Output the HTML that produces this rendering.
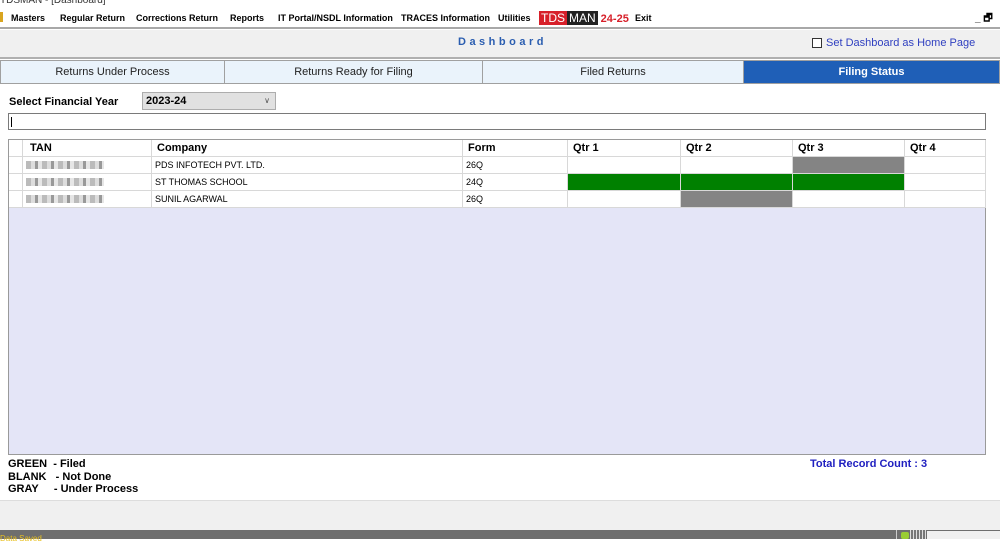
<!DOCTYPE html>
<html><head><style>
*{margin:0;padding:0;box-sizing:border-box}
body{width:1000px;height:539px;position:relative;overflow:hidden;background:#fff;font-family:"Liberation Sans",Arial,sans-serif;font-size:11px;color:#000}
.a{position:absolute}
.m{position:absolute;top:13px;font-weight:bold;font-size:9px;white-space:nowrap}
.tab{position:absolute;top:60px;height:24px;background:#eaf3fb;border:1px solid #a0a0a0;text-align:center;line-height:22px;font-size:11px;color:#222}
.cell{position:absolute;border-right:1px solid #d8d8d8;border-bottom:1px solid #d8d8d8;background:#fff;font-size:9px;line-height:16px;padding-left:3px}
.blur{width:78px;height:8px;margin-top:4px;background:repeating-linear-gradient(90deg,#bbb 0 5px,#ddd 5px 9px,#999 9px 12px,#e6e6e6 12px 16px)}
</style></head><body>
<div class="a" style="top:-5px;left:0;font-size:10px;color:#333">TDSMAN - [Dashboard]</div>
<div class="a" style="top:8px;left:0;width:1000px;height:21px;background:#fff;border-bottom:2px solid #a8a8a8"></div>
<div class="a" style="top:12px;left:0;width:3px;height:10px;background:#d9a520"></div>
<div class="m" style="left:11px">Masters</div>
<div class="m" style="left:60px">Regular Return</div>
<div class="m" style="left:136px">Corrections Return</div>
<div class="m" style="left:230px">Reports</div>
<div class="m" style="left:278px">IT Portal/NSDL Information</div>
<div class="m" style="left:401px">TRACES Information</div>
<div class="m" style="left:498px">Utilities</div>
<div class="a" style="top:11px;left:539px;height:15px;font-size:12px;line-height:15px;white-space:nowrap"><span style="background:#d7202a;color:#fff;padding:0 2px">TDS</span><span style="background:#222;color:#fff;padding:0 2px">MAN</span><span style="color:#d7202a;font-weight:bold;padding:0 3px;font-size:11px">24-25</span></div>
<div class="m" style="left:635px">Exit</div>
<div class="a" style="top:11px;left:975px;font-size:10px;font-weight:bold">_ &#x1F5D7;</div>
<div class="a" style="top:30px;left:0;width:1000px;height:29px;background:#f0f0f0;border-bottom:2px solid #b0b0b0"></div>
<div class="a" style="top:36px;left:458px;color:#2a5db0;font-weight:bold;font-size:11px;letter-spacing:3.5px">Dashboard</div>
<div class="a" style="top:38px;left:812px;width:10px;height:10px;border:1px solid #333;background:#fff"></div>
<div class="a" style="top:37px;left:826px;color:#3040c0;font-size:11px">Set Dashboard as Home Page</div>
<div class="tab" style="left:0;width:225px">Returns Under Process</div>
<div class="tab" style="left:224px;width:259px">Returns Ready for Filing</div>
<div class="tab" style="left:482px;width:262px">Filed Returns</div>
<div class="tab" style="left:743px;width:257px;background:#1f5fb7;color:#fff;font-weight:bold">Filing Status</div>
<div class="a" style="top:96px;left:9px;font-weight:bold;font-size:11px">Select Financial Year</div>
<div class="a" style="top:92px;left:142px;width:134px;height:18px;background:#e1e1e1;border:1px solid #adadad;font-weight:bold;font-size:11px;line-height:16px;padding-left:3px">2023-24<span style="position:absolute;right:5px;font-weight:normal;font-size:8px;color:#555">&#8744;</span></div>
<div class="a" style="top:113px;left:8px;width:978px;height:17px;border:1px solid #7a7a7a;background:#fff"><div style="margin:3px 0 0 2px;width:1px;height:10px;background:#000"></div></div>
<div class="a" style="top:139px;left:8px;width:978px;height:316px;background:#e4e5f7;border:1px solid #9a9a9a"></div>
<div class="a" style="top:140px;left:9px">
<div class="cell" style="left:0;top:0;width:14px;height:17px"></div>
<div class="cell" style="left:14px;top:0;width:129px;height:17px;font-weight:bold;font-size:11px;padding-left:7px">TAN</div>
<div class="cell" style="left:143px;top:0;width:311px;height:17px;font-weight:bold;font-size:11px;padding-left:5px">Company</div>
<div class="cell" style="left:454px;top:0;width:105px;height:17px;font-weight:bold;font-size:11px;padding-left:5px">Form</div>
<div class="cell" style="left:559px;top:0;width:113px;height:17px;font-weight:bold;font-size:11px;padding-left:5px">Qtr 1</div>
<div class="cell" style="left:672px;top:0;width:112px;height:17px;font-weight:bold;font-size:11px;padding-left:5px">Qtr 2</div>
<div class="cell" style="left:784px;top:0;width:112px;height:17px;font-weight:bold;font-size:11px;padding-left:5px">Qtr 3</div>
<div class="cell" style="left:896px;top:0;width:81px;height:17px;font-weight:bold;font-size:11px;padding-left:5px">Qtr 4</div>

<div class="cell" style="left:0;top:17px;width:14px;height:17px"></div>
<div class="cell" style="left:14px;top:17px;width:129px;height:17px"><div class="blur"></div></div>
<div class="cell" style="left:143px;top:17px;width:311px;height:17px">PDS INFOTECH PVT. LTD.</div>
<div class="cell" style="left:454px;top:17px;width:105px;height:17px">26Q</div>
<div class="cell" style="left:559px;top:17px;width:113px;height:17px"></div>
<div class="cell" style="left:672px;top:17px;width:112px;height:17px"></div>
<div class="cell" style="left:784px;top:17px;width:112px;height:17px;background:#848484"></div>
<div class="cell" style="left:896px;top:17px;width:81px;height:17px"></div>

<div class="cell" style="left:0;top:34px;width:14px;height:17px"></div>
<div class="cell" style="left:14px;top:34px;width:129px;height:17px"><div class="blur"></div></div>
<div class="cell" style="left:143px;top:34px;width:311px;height:17px">ST THOMAS SCHOOL</div>
<div class="cell" style="left:454px;top:34px;width:105px;height:17px">24Q</div>
<div class="cell" style="left:559px;top:34px;width:113px;height:17px;background:#008000"></div>
<div class="cell" style="left:672px;top:34px;width:112px;height:17px;background:#008000"></div>
<div class="cell" style="left:784px;top:34px;width:112px;height:17px;background:#008000"></div>
<div class="cell" style="left:896px;top:34px;width:81px;height:17px"></div>

<div class="cell" style="left:0;top:51px;width:14px;height:17px"></div>
<div class="cell" style="left:14px;top:51px;width:129px;height:17px"><div class="blur"></div></div>
<div class="cell" style="left:143px;top:51px;width:311px;height:17px">SUNIL AGARWAL</div>
<div class="cell" style="left:454px;top:51px;width:105px;height:17px">26Q</div>
<div class="cell" style="left:559px;top:51px;width:113px;height:17px"></div>
<div class="cell" style="left:672px;top:51px;width:112px;height:17px;background:#848484"></div>
<div class="cell" style="left:784px;top:51px;width:112px;height:17px"></div>
<div class="cell" style="left:896px;top:51px;width:81px;height:17px"></div>
</div>
<div class="a" style="top:458px;left:8px;font-weight:bold;font-size:11px;line-height:12.5px;white-space:pre">GREEN  - Filed
BLANK   - Not Done
GRAY     - Under Process</div>
<div class="a" style="top:458px;left:810px;color:#2020c0;font-weight:bold;font-size:11px">Total Record Count : 3</div>
<div class="a" style="top:500px;left:0;width:1000px;height:30px;background:#f0f0f0;border-top:1px solid #ddd"></div>
<div class="a" style="top:530px;left:0;width:1000px;height:9px;background:#6e6e6e"></div>
<div class="a" style="top:534px;left:0;font-size:8px;color:#e8c020">Data Saved</div>
<div class="a" style="top:530px;left:896px;width:1px;height:9px;background:#ccc"></div>
<div class="a" style="top:532px;left:901px;width:8px;height:7px;background:#9c3;border-radius:2px"></div>
<div class="a" style="top:530px;left:910px;width:16px;height:9px;background:repeating-linear-gradient(90deg,#ddd 0 1px,#777 1px 3px)"></div>
<div class="a" style="top:531px;left:927px;width:73px;height:8px;background:#f0f0f0"></div>
</body></html>
